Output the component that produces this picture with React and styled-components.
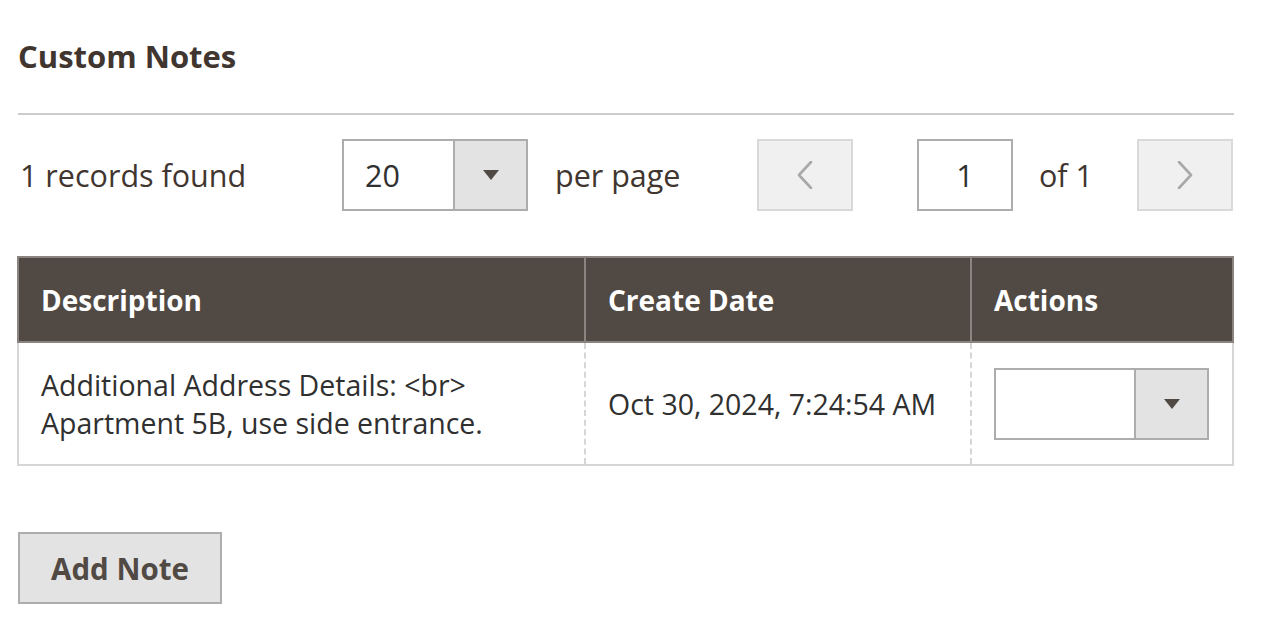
import React from "react";
import styled, { createGlobalStyle } from "styled-components";

const Global = createGlobalStyle`
  html, body { margin: 0; padding: 0; background: #fff; }
  body { font-family: "Open Sans", "Noto Sans", sans-serif; color: #303030; }
  * { box-sizing: border-box; }
`;

const Page = styled.div`
  width: 1216px;
  margin-left: 18px;
  padding-top: 37px;
`;

const TitleBar = styled.div`
  border-bottom: 2px solid #cccccc;
  padding-bottom: 38px;
`;

const Title = styled.h2`
  margin: 0;
  font-size: 31px;
  line-height: 38px;
  font-weight: 700;
  color: #41362f;
`;

const Toolbar = styled.div`
  display: flex;
  align-items: center;
  height: 72px;
  margin-top: 24px;
  padding-right: 1px;
`;

const Label = styled.span`
  font-size: 30.5px;
  line-height: 38px;
  color: #41362f;
  white-space: nowrap;
  padding-left: ${(p) => p.$pl || 0}px;
  width: ${(p) => (p.$w ? `${p.$w}px` : "auto")};
  flex: none;
`;

const Select = styled.div`
  display: flex;
  width: ${(p) => p.$w}px;
  height: 72px;
  border: 2px solid #adadad;
  background: #fff;
  flex: none;
`;

const SelectValue = styled.div`
  flex: 1;
  display: flex;
  align-items: center;
  padding-left: 21px;
  font-size: 30.5px;
  color: #303030;
`;

const SelectButton = styled.div`
  width: 73px;
  border-left: 2px solid #adadad;
  background: #e3e3e3;
  display: flex;
  align-items: center;
  justify-content: center;
`;

const Caret = styled.span`
  width: 0;
  height: 0;
  border-left: 8px solid transparent;
  border-right: 8px solid transparent;
  border-top: 10px solid #514943;
`;

const PagerButton = styled.button`
  width: 96px;
  height: 72px;
  flex: none;
  margin-left: ${(p) => (p.$auto ? "auto" : `${p.$ml || 0}px`)};
  background: #f0f0f0;
  border: 2px solid #d9d9d9;
  padding: 0;
  display: flex;
  align-items: center;
  justify-content: center;
  cursor: default;
`;

const PageInput = styled.div`
  width: 96px;
  height: 72px;
  flex: none;
  margin-left: ${(p) => p.$ml || 0}px;
  border: 2px solid #adadad;
  background: #fff;
  display: flex;
  align-items: center;
  justify-content: center;
  font-size: 30.5px;
  color: #303030;
`;

const Table = styled.table`
  width: 1215px;
  margin: 45px 0 0 -1px;
  border-collapse: collapse;
  table-layout: fixed;
`;

const Th = styled.th`
  background: #514943;
  color: #fff;
  font-size: 28px;
  font-weight: 700;
  text-align: left;
  height: 85px;
  padding: 0 22px;
  border: 2px solid #8a837f;
  line-height: 38px;
`;

const Td = styled.td`
  font-size: 28.5px;
  line-height: 38px;
  color: #303030;
  padding: 23px 22px 22px;
  vertical-align: middle;
  border-bottom: 2px solid #d6d6d6;
  border-left: 2px ${(p) => (p.$first ? "solid" : "dashed")} #d6d6d6;
  border-right: 2px ${(p) => (p.$last ? "solid" : "dashed")} #d6d6d6;
`;

const AddButton = styled.button`
  margin-top: 66px;
  width: 204px;
  height: 72px;
  background: #e3e3e3;
  border: 2px solid #adadad;
  font-family: "Open Sans", "Noto Sans", sans-serif;
  font-size: 29.5px;
  font-weight: 700;
  color: #514943;
  padding: 0;
  cursor: pointer;
`;

const Chevron = ({ dir }) => (
  <svg width="16" height="28" viewBox="0 0 16 28">
    <polyline
      points={dir === "left" ? "14,1 2,14 14,27" : "2,1 14,14 2,27"}
      fill="none"
      stroke="#a9a9a9"
      strokeWidth="2.6"
      strokeLinecap="round"
      strokeLinejoin="round"
    />
  </svg>
);

export default function App() {
  return (
    <>
      <Global />
      <Page>
        <TitleBar>
          <Title>Custom Notes</Title>
        </TitleBar>
        <Toolbar>
          <Label $w={324} $pl={2}>1 records found</Label>
          <Select $w={186}>
            <SelectValue>20</SelectValue>
            <SelectButton>
              <Caret />
            </SelectButton>
          </Select>
          <Label $pl={27}>per page</Label>
          <PagerButton $auto aria-label="Previous page">
            <Chevron dir="left" />
          </PagerButton>
          <PageInput $ml={64}>1</PageInput>
          <Label $w={124} $pl={26}>of 1</Label>
          <PagerButton aria-label="Next page">
            <Chevron dir="right" />
          </PagerButton>
        </Toolbar>
        <Table>
          <colgroup>
            <col style={{ width: 567 }} />
            <col style={{ width: 386 }} />
            <col style={{ width: 262 }} />
          </colgroup>
          <thead>
            <tr>
              <Th>Description</Th>
              <Th>Create Date</Th>
              <Th>Actions</Th>
            </tr>
          </thead>
          <tbody>
            <tr>
              <Td $first>
                Additional Address Details: &lt;br&gt;
                <br />
                Apartment 5B, use side entrance.
              </Td>
              <Td>Oct 30, 2024, 7:24:54 AM</Td>
              <Td $last>
                <Select $w={215}>
                  <SelectValue />
                  <SelectButton>
                    <Caret />
                  </SelectButton>
                </Select>
              </Td>
            </tr>
          </tbody>
        </Table>
        <AddButton>Add Note</AddButton>
      </Page>
    </>
  );
}
